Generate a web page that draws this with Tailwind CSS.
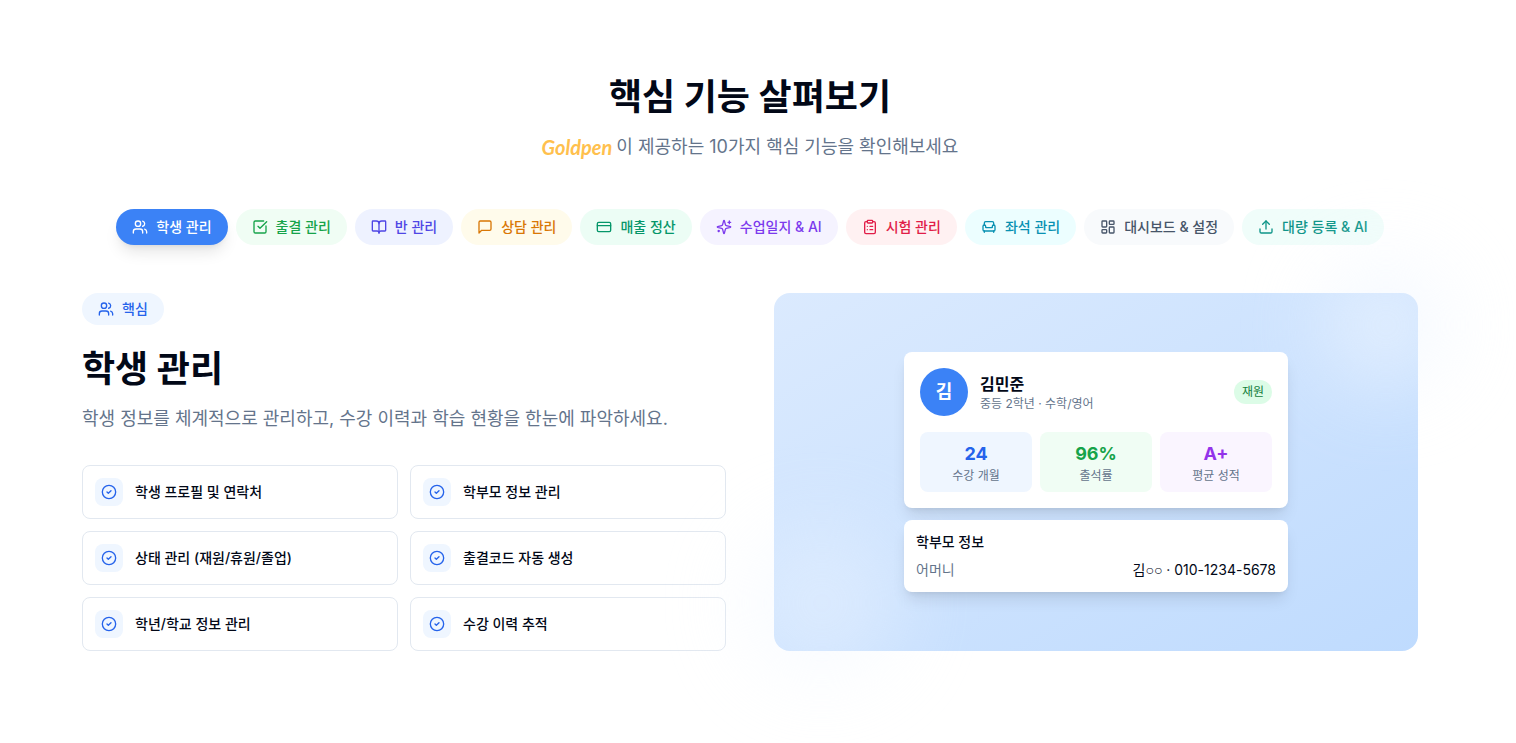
<!DOCTYPE html>
<html lang="ko">
<head>
  <meta charset="UTF-8">
  <meta name="viewport" content="width=device-width, initial-scale=1.0">
  <title>Goldpen - 핵심 기능</title>
  <script src="https://cdn.jsdelivr.net/npm/@tailwindcss/browser@4"></script>
</head>
<body class="bg-white text-[#020817] font-['Inter','Noto_Sans_CJK_KR',sans-serif] overflow-x-hidden">
  <!-- 아이콘 -->
  <svg class="hidden">
    <defs>
      <symbol id="users" viewBox="0 0 24 24"><path d="M16 21v-2a4 4 0 0 0-4-4H6a4 4 0 0 0-4 4v2"/><circle cx="9" cy="7" r="4"/><path d="M22 21v-2a4 4 0 0 0-3-3.87"/><path d="M16 3.13a4 4 0 0 1 0 7.75"/></symbol>
      <symbol id="check-square" viewBox="0 0 24 24"><path d="M21 10.5V19a2 2 0 0 1-2 2H5a2 2 0 0 1-2-2V5a2 2 0 0 1 2-2h12.5"/><path d="m9 11 3 3L22 4"/></symbol>
      <symbol id="book-open" viewBox="0 0 24 24"><path d="M12 7v14"/><path d="M3 18a1 1 0 0 1-1-1V4a1 1 0 0 1 1-1h5a4 4 0 0 1 4 4 4 4 0 0 1 4-4h5a1 1 0 0 1 1 1v13a1 1 0 0 1-1 1h-6a3 3 0 0 0-3 3 3 3 0 0 0-3-3z"/></symbol>
      <symbol id="message" viewBox="0 0 24 24"><path d="M21 15a2 2 0 0 1-2 2H7l-4 4V5a2 2 0 0 1 2-2h14a2 2 0 0 1 2 2z"/></symbol>
      <symbol id="credit-card" viewBox="0 0 24 24"><rect width="20" height="14" x="2" y="5" rx="2"/><path d="M2 10h20"/></symbol>
      <symbol id="sparkles" viewBox="0 0 24 24"><path d="M9.937 15.5A2 2 0 0 0 8.5 14.063l-6.135-1.582a.5.5 0 0 1 0-.962L8.5 9.936A2 2 0 0 0 9.937 8.5l1.582-6.135a.5.5 0 0 1 .963 0L14.063 8.5A2 2 0 0 0 15.5 9.937l6.135 1.581a.5.5 0 0 1 0 .964L15.5 14.063a2 2 0 0 0-1.437 1.437l-1.582 6.135a.5.5 0 0 1-.963 0z"/><path d="M20 3v4"/><path d="M22 5h-4"/><path d="M4 17v2"/><path d="M5 18H3"/></symbol>
      <symbol id="clipboard-list" viewBox="0 0 24 24"><rect width="8" height="4" x="8" y="2" rx="1"/><path d="M16 4h2a2 2 0 0 1 2 2v14a2 2 0 0 1-2 2H6a2 2 0 0 1-2-2V6a2 2 0 0 1 2-2h2"/><path d="M12 11h4"/><path d="M12 16h4"/><path d="M8 11h.01"/><path d="M8 16h.01"/></symbol>
      <symbol id="armchair" viewBox="0 0 24 24"><path d="M19 9V6a2 2 0 0 0-2-2H7a2 2 0 0 0-2 2v3"/><path d="M3 16a2 2 0 0 0 2 2h14a2 2 0 0 0 2-2v-5a2 2 0 0 0-4 0v1.5a.5.5 0 0 1-.5.5h-9a.5.5 0 0 1-.5-.5V11a2 2 0 0 0-4 0z"/><path d="M5 18v2"/><path d="M19 18v2"/></symbol>
      <symbol id="dashboard" viewBox="0 0 24 24"><rect width="7" height="9" x="3" y="3" rx="1"/><rect width="7" height="5" x="14" y="3" rx="1"/><rect width="7" height="9" x="14" y="12" rx="1"/><rect width="7" height="5" x="3" y="16" rx="1"/></symbol>
      <symbol id="upload" viewBox="0 0 24 24"><path d="M21 15v4a2 2 0 0 1-2 2H5a2 2 0 0 1-2-2v-4"/><path d="m17 8-5-5-5 5"/><path d="M12 3v12"/></symbol>
      <symbol id="circle-check" viewBox="0 0 24 24"><circle cx="12" cy="12" r="10"/><path d="m9 12 2 2 4-4"/></symbol>
    </defs>
  </svg>

  <section class="pt-[77px] pb-[92px] pr-4">
    <div class="max-w-[1400px] mx-auto px-8">
      <!-- 제목 -->
      <header class="text-center mb-12">
        <h2 class="text-4xl font-bold mb-4">핵심 기능 살펴보기</h2>
        <p class="flex items-center justify-center gap-1 text-lg text-[#64748b]">
          <span class="text-xl leading-7 font-bold italic text-[#ffc04d] font-['Lato',sans-serif]">Goldpen</span>
          <span>이 제공하는 10가지 핵심 기능을 확인해보세요</span>
        </p>
      </header>

      <!-- 기능 탭 -->
      <nav class="flex flex-wrap justify-center gap-2 mb-12 text-sm font-medium">
        <button class="flex items-center gap-2 px-4 py-2 rounded-full bg-[#3b82f6] text-white shadow-lg"><svg class="size-4 fill-none stroke-current stroke-2" stroke-linecap="round" stroke-linejoin="round"><use href="#users"/></svg>학생 관리</button>
        <button class="flex items-center gap-2 px-4 py-2 rounded-full bg-[#f0fdf4] text-[#16a34a]"><svg class="size-4 fill-none stroke-current stroke-2" stroke-linecap="round" stroke-linejoin="round"><use href="#check-square"/></svg>출결 관리</button>
        <button class="flex items-center gap-2 px-4 py-2 rounded-full bg-[#eef2ff] text-[#4f46e5]"><svg class="size-4 fill-none stroke-current stroke-2" stroke-linecap="round" stroke-linejoin="round"><use href="#book-open"/></svg>반 관리</button>
        <button class="flex items-center gap-2 px-4 py-2 rounded-full bg-[#fffbeb] text-[#d97706]"><svg class="size-4 fill-none stroke-current stroke-2" stroke-linecap="round" stroke-linejoin="round"><use href="#message"/></svg>상담 관리</button>
        <button class="flex items-center gap-2 px-4 py-2 rounded-full bg-[#ecfdf5] text-[#059669]"><svg class="size-4 fill-none stroke-current stroke-2" stroke-linecap="round" stroke-linejoin="round"><use href="#credit-card"/></svg>매출 정산</button>
        <button class="flex items-center gap-2 px-4 py-2 rounded-full bg-[#f5f3ff] text-[#7c3aed]"><svg class="size-4 fill-none stroke-current stroke-2" stroke-linecap="round" stroke-linejoin="round"><use href="#sparkles"/></svg>수업일지 &amp; AI</button>
        <button class="flex items-center gap-2 px-4 py-2 rounded-full bg-[#fff1f2] text-[#e11d48]"><svg class="size-4 fill-none stroke-current stroke-2" stroke-linecap="round" stroke-linejoin="round"><use href="#clipboard-list"/></svg>시험 관리</button>
        <button class="flex items-center gap-2 px-4 py-2 rounded-full bg-[#ecfeff] text-[#0891b2]"><svg class="size-4 fill-none stroke-current stroke-2" stroke-linecap="round" stroke-linejoin="round"><use href="#armchair"/></svg>좌석 관리</button>
        <button class="flex items-center gap-2 px-4 py-2 rounded-full bg-[#f8fafc] text-[#475569]"><svg class="size-4 fill-none stroke-current stroke-2" stroke-linecap="round" stroke-linejoin="round"><use href="#dashboard"/></svg>대시보드 &amp; 설정</button>
        <button class="flex items-center gap-2 px-4 py-2 rounded-full bg-[#f0fdfa] text-[#0d9488]"><svg class="size-4 fill-none stroke-current stroke-2" stroke-linecap="round" stroke-linejoin="round"><use href="#upload"/></svg>대량 등록 &amp; AI</button>
      </nav>

      <div class="grid lg:grid-cols-2 gap-12">
        <!-- 기능 설명 -->
        <div>
          <div class="inline-flex items-center gap-2 px-4 py-1.5 mb-6 rounded-full bg-[#eff6ff] text-[#2563eb] text-sm font-medium">
            <svg class="size-4 fill-none stroke-current stroke-2" stroke-linecap="round" stroke-linejoin="round"><use href="#users"/></svg>핵심
          </div>
          <h3 class="text-4xl font-bold mb-4">학생 관리</h3>
          <p class="text-lg text-[#64748b] mb-8">학생 정보를 체계적으로 관리하고, 수강 이력과 학습 현황을 한눈에 파악하세요.</p>
          <ul class="grid sm:grid-cols-2 gap-3 text-sm font-medium">
            <li class="flex items-center gap-3 p-3 rounded-lg border border-[#e2e8f0] bg-white">
              <span class="p-1.5 rounded-lg bg-[#eff6ff] text-[#2563eb]"><svg class="size-4 fill-none stroke-current stroke-2" stroke-linecap="round" stroke-linejoin="round"><use href="#circle-check"/></svg></span>학생 프로필 및 연락처
            </li>
            <li class="flex items-center gap-3 p-3 rounded-lg border border-[#e2e8f0] bg-white">
              <span class="p-1.5 rounded-lg bg-[#eff6ff] text-[#2563eb]"><svg class="size-4 fill-none stroke-current stroke-2" stroke-linecap="round" stroke-linejoin="round"><use href="#circle-check"/></svg></span>학부모 정보 관리
            </li>
            <li class="flex items-center gap-3 p-3 rounded-lg border border-[#e2e8f0] bg-white">
              <span class="p-1.5 rounded-lg bg-[#eff6ff] text-[#2563eb]"><svg class="size-4 fill-none stroke-current stroke-2" stroke-linecap="round" stroke-linejoin="round"><use href="#circle-check"/></svg></span>상태 관리 (재원/휴원/졸업)
            </li>
            <li class="flex items-center gap-3 p-3 rounded-lg border border-[#e2e8f0] bg-white">
              <span class="p-1.5 rounded-lg bg-[#eff6ff] text-[#2563eb]"><svg class="size-4 fill-none stroke-current stroke-2" stroke-linecap="round" stroke-linejoin="round"><use href="#circle-check"/></svg></span>출결코드 자동 생성
            </li>
            <li class="flex items-center gap-3 p-3 rounded-lg border border-[#e2e8f0] bg-white">
              <span class="p-1.5 rounded-lg bg-[#eff6ff] text-[#2563eb]"><svg class="size-4 fill-none stroke-current stroke-2" stroke-linecap="round" stroke-linejoin="round"><use href="#circle-check"/></svg></span>학년/학교 정보 관리
            </li>
            <li class="flex items-center gap-3 p-3 rounded-lg border border-[#e2e8f0] bg-white">
              <span class="p-1.5 rounded-lg bg-[#eff6ff] text-[#2563eb]"><svg class="size-4 fill-none stroke-current stroke-2" stroke-linecap="round" stroke-linejoin="round"><use href="#circle-check"/></svg></span>수강 이력 추적
            </li>
          </ul>
        </div>

        <!-- 미리보기 -->
        <div class="relative flex items-center justify-center p-8 rounded-2xl bg-linear-to-br/srgb from-[#dbeafe] to-[#bfdbfe]">
          <div class="absolute -top-8 -right-8 size-32 rounded-full bg-[#eff6ff] opacity-60 blur-2xl"></div>
          <div class="absolute -bottom-8 -left-8 size-40 rounded-full bg-[#eff6ff] opacity-40 blur-2xl"></div>
          <div class="relative w-full max-w-sm space-y-3">
            <div class="p-4 rounded-lg bg-white shadow-lg">
              <div class="flex items-center gap-3 mb-4">
                <div class="flex items-center justify-center size-12 rounded-full bg-[#3b82f6] text-white text-lg font-bold">김</div>
                <div class="flex-1">
                  <p class="font-bold leading-6">김민준</p>
                  <p class="text-xs text-[#64748b]">중등 2학년 · 수학/영어</p>
                </div>
                <span class="px-2 py-1 rounded-full bg-[#dcfce7] text-[#15803d] text-xs">재원</span>
              </div>
              <div class="grid grid-cols-3 gap-2 text-center">
                <div class="p-2 rounded-lg bg-[#eff6ff]">
                  <p class="text-lg font-bold text-[#2563eb]">24</p>
                  <p class="text-xs text-[#64748b]">수강 개월</p>
                </div>
                <div class="p-2 rounded-lg bg-[#f0fdf4]">
                  <p class="text-lg font-bold text-[#16a34a]">96%</p>
                  <p class="text-xs text-[#64748b]">출석률</p>
                </div>
                <div class="p-2 rounded-lg bg-[#faf5ff]">
                  <p class="text-lg font-bold text-[#9333ea]">A+</p>
                  <p class="text-xs text-[#64748b]">평균 성적</p>
                </div>
              </div>
            </div>
            <div class="p-3 rounded-lg bg-white shadow-lg text-sm">
              <p class="font-medium mb-2">학부모 정보</p>
              <div class="flex justify-between">
                <span class="text-[#64748b]">어머니</span>
                <span>김<span class="font-['Liberation_Sans',sans-serif]">○○</span> · 010-1234-5678</span>
              </div>
            </div>
          </div>
        </div>
      </div>
    </div>
  </section>
</body>
</html>
